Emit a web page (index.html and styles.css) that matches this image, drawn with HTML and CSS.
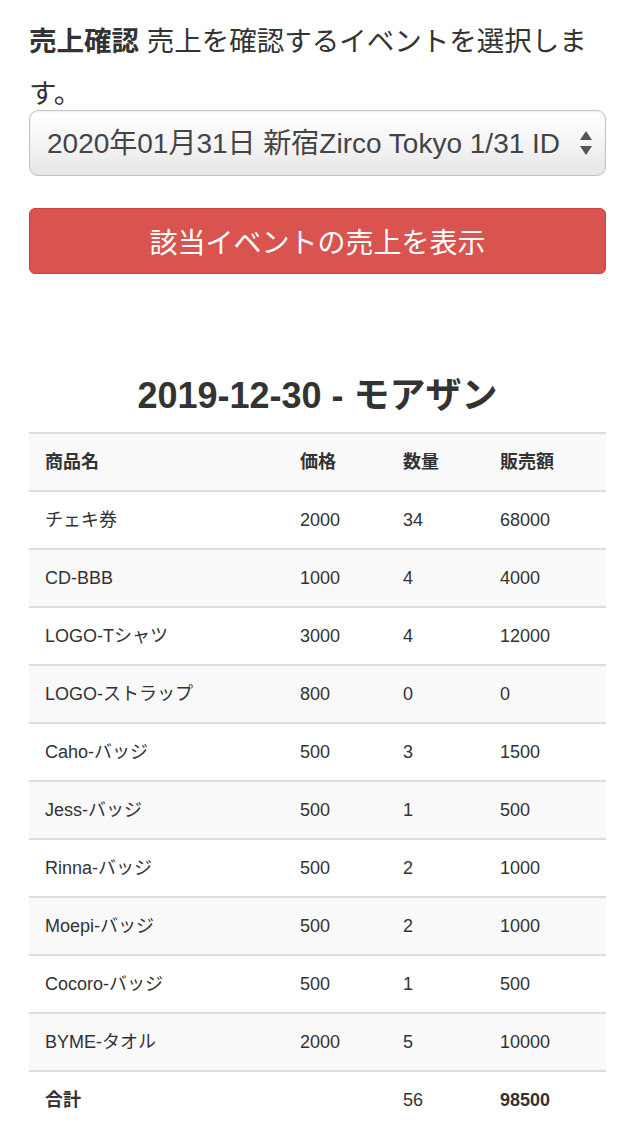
FILE: index.html
```html
<!DOCTYPE html>
<html lang="ja">
<head>
<meta charset="utf-8">
<title>売上確認</title>
<link rel="stylesheet" href="styles.css">
</head>
<body>
<div class="page">
  <p class="intro"><strong>売上確認</strong> 売上を確認するイベントを選択します。</p>
  <div class="select-wrap">
    <select class="select">
      <option>2020年01月31日 新宿Zirco Tokyo 1/31 ID</option>
    </select>
    <svg class="select-arrows" width="14" height="26" viewBox="0 0 14 26" aria-hidden="true">
      <path d="M7 1 L13 10 L1 10 Z" fill="#555"/>
      <path d="M1 16 L13 16 L7 25 Z" fill="#555"/>
    </svg>
  </div>
  <button class="btn-danger" type="button">該当イベントの売上を表示</button>

  <h2 class="title">2019-12-30 - モアザン</h2>

  <table class="sales">
    <colgroup>
      <col class="c-name"><col class="c-price"><col class="c-qty"><col class="c-total">
    </colgroup>
    <tbody>
      <tr class="head"><th>商品名</th><th>価格</th><th>数量</th><th>販売額</th></tr>
      <tr><td>チェキ券</td><td>2000</td><td>34</td><td>68000</td></tr>
      <tr><td>CD-BBB</td><td>1000</td><td>4</td><td>4000</td></tr>
      <tr><td>LOGO-Tシャツ</td><td>3000</td><td>4</td><td>12000</td></tr>
      <tr><td>LOGO-ストラップ</td><td>800</td><td>0</td><td>0</td></tr>
      <tr><td>Caho-バッジ</td><td>500</td><td>3</td><td>1500</td></tr>
      <tr><td>Jess-バッジ</td><td>500</td><td>1</td><td>500</td></tr>
      <tr><td>Rinna-バッジ</td><td>500</td><td>2</td><td>1000</td></tr>
      <tr><td>Moepi-バッジ</td><td>500</td><td>2</td><td>1000</td></tr>
      <tr><td>Cocoro-バッジ</td><td>500</td><td>1</td><td>500</td></tr>
      <tr><td>BYME-タオル</td><td>2000</td><td>5</td><td>10000</td></tr>
      <tr class="sum"><th>合計</th><td></td><td>56</td><th>98500</th></tr>
    </tbody>
  </table>
</div>
</body>
</html>
```
FILE: styles.css
```css
html, body {
  margin: 0;
  padding: 0;
  background: #fff;
}
body {
  font-family: "Liberation Sans", "Noto Sans CJK JP", sans-serif;
  color: #333;
}
.page {
  padding: 16px 28px 0 29px;
}
.intro {
  margin: 0 0 -10px;
  font-size: 27.5px;
  line-height: 52px;
}
.intro strong {
  font-weight: bold;
}
.select-wrap {
  position: relative;
}
.select {
  -webkit-appearance: none;
  appearance: none;
  display: block;
  width: 100%;
  height: 66px;
  margin: 0;
  padding: 0 40px 0 17px;
  border: 1px solid #c4c4c4;
  border-radius: 9px;
  background: linear-gradient(#ffffff 0%, #f6f6f6 45%, #e6e6e6 100%);
  box-shadow: inset 0 1px 2px rgba(0,0,0,0.08);
  font-family: "Liberation Sans", "Noto Sans CJK JP", sans-serif;
  font-size: 28px;
  color: #444;
}
.select-arrows {
  position: absolute;
  right: 13px;
  top: 20px;
}
.btn-danger {
  display: block;
  width: 100%;
  height: 66px;
  margin: 32px 0 0;
  padding: 0;
  border: 1px solid #d43f3a;
  border-radius: 6px;
  background: #d9534f;
  color: #fff;
  font-family: "Liberation Sans", "Noto Sans CJK JP", sans-serif;
  font-size: 28px;
  text-align: center;
}
.title {
  margin: 102px 0 16px;
  font-size: 36px;
  line-height: 40px;
  font-weight: bold;
  text-align: center;
  color: #333;
}
.sales {
  width: 100%;
  table-layout: fixed;
  border-collapse: collapse;
  font-size: 18px;
}
.c-name { width: 255px; }
.c-price { width: 103px; }
.c-qty { width: 97px; }
.c-total { width: 122px; }
.sales th,
.sales td {
  padding: 16px 16px;
  line-height: 24px;
  height: 24px;
  text-align: left;
  vertical-align: middle;
  border-top: 2px solid #dddddd;
  white-space: nowrap;
}
.sales th {
  font-weight: bold;
}
.sales tr:nth-child(odd) {
  background: #f9f9f9;
}
.sales tr.sum {
  background: #fff;
}
```
